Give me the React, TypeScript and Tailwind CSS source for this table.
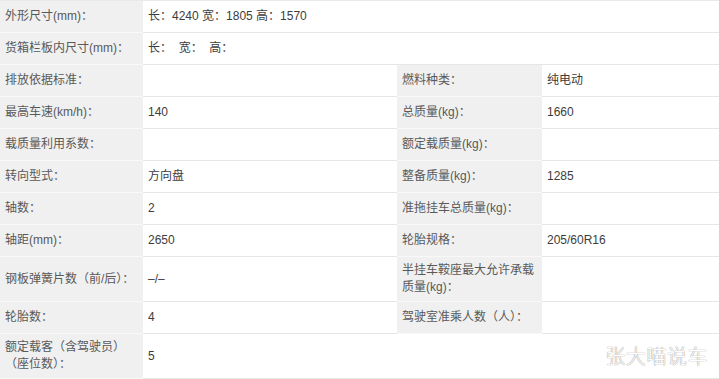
import React from "react";

type Row = {
  l1: React.ReactNode;
  v1?: React.ReactNode;
  l2?: React.ReactNode;
  v2?: React.ReactNode;
  span?: boolean;
  tall?: boolean;
};

const rows: Row[] = [
  { l1: "外形尺寸(mm)：", v1: "长：4240 宽：1805 高：1570", span: true },
  { l1: "货箱栏板内尺寸(mm)：", v1: "长：  宽：  高：", span: true },
  { l1: "排放依据标准：", v1: "", l2: "燃料种类：", v2: "纯电动" },
  { l1: "最高车速(km/h)：", v1: "140", l2: "总质量(kg)：", v2: "1660" },
  { l1: "载质量利用系数：", v1: "", l2: "额定载质量(kg)：", v2: "" },
  { l1: "转向型式：", v1: "方向盘", l2: "整备质量(kg)：", v2: "1285" },
  { l1: "轴数：", v1: "2", l2: "准拖挂车总质量(kg)：", v2: "" },
  { l1: "轴距(mm)：", v1: "2650", l2: "轮胎规格：", v2: "205/60R16" },
  {
    l1: "钢板弹簧片数（前/后）：",
    v1: "–/–",
    l2: "半挂车鞍座最大允许承载质量(kg)：",
    v2: "",
    tall: true,
  },
  { l1: "轮胎数：", v1: "4", l2: "驾驶室准乘人数（人）：", v2: "" },
  {
    l1: "额定载客（含驾驶员）（座位数）：",
    v1: "5",
    span: true,
    tall: true,
  },
];

const font =
  "font-['Liberation_Sans','Noto_Sans_CJK_SC',sans-serif] text-[12px] leading-[17px]";

function Label({ children, first }: { children: React.ReactNode; first: boolean }) {
  return (
    <div
      className={`flex items-center bg-[#f0f0f0] pl-[5px] pr-[3px] text-[#595959] border-b border-[#f8f8f8] ${
        first ? "border-t border-t-[#e9e9e9]" : ""
      }`}
    >
      <span>{children}</span>
    </div>
  );
}

function Value({ children, first }: { children: React.ReactNode; first: boolean }) {
  return (
    <div
      className={`flex items-center bg-white pl-[5px] text-[#3d3d3d] border-b border-[#e6e6e6] whitespace-pre ${
        first ? "border-t border-t-[#e9e9e9]" : ""
      }`}
    >
      {children}
    </div>
  );
}

export default function App() {
  return (
    <div className={`relative w-[719px] h-[379px] bg-white overflow-hidden ${font}`}>
      {rows.map((r, i) => {
        const first = i === 0;
        const h = r.tall ? "h-[45px]" : first ? "h-[33px]" : "h-[32px]";
        if (r.span) {
          return (
            <div key={i} className={`grid grid-cols-[143px_1fr] ${h}`}>
              <Label first={first}>{r.l1}</Label>
              <Value first={first}>{r.v1}</Value>
            </div>
          );
        }
        return (
          <div key={i} className={`grid grid-cols-[143px_254px_145px_1fr] ${h}`}>
            <Label first={first}>{r.l1}</Label>
            <Value first={first}>{r.v1}</Value>
            <Label first={first}>{r.l2}</Label>
            <Value first={first}>{r.v2}</Value>
          </div>
        );
      })}
      <div className="absolute right-[11px] top-[343px] font-['Noto_Sans_CJK_SC',sans-serif] text-[20px] leading-[26px] font-light tracking-[0.5px] text-white [text-shadow:0_0_1px_#8a8a8a,0_0_1px_#b0b0b0]">
        张大喵说车
      </div>
    </div>
  );
}
